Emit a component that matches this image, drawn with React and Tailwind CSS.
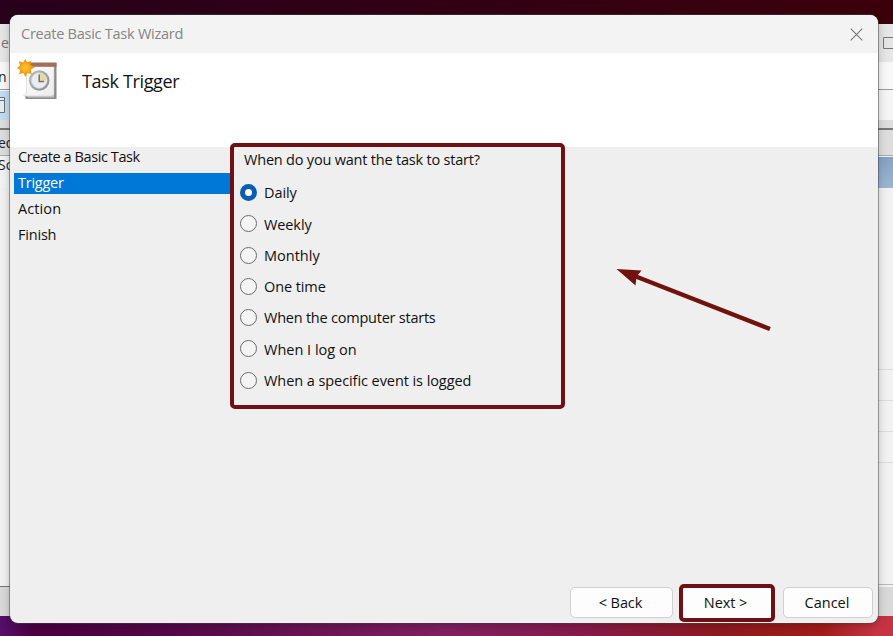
const STEPS = [
  ["Create a Basic Task", "tracking-[-0.4px]"],
  ["Trigger", "tracking-[-0.25px]"],
  ["Action", "tracking-[0.1px]"],
  ["Finish", "tracking-[-0.2px]"],
];

const TRIGGERS = [
  ["Daily", "tracking-[-0.1px]"],
  ["Weekly", "tracking-[-0.1px]"],
  ["Monthly", "tracking-[0px]"],
  ["One time", "tracking-[-0.1px]"],
  ["When the computer starts", "tracking-[-0.23px]"],
  ["When I log on", "tracking-[0px]"],
  ["When a specific event is logged", "tracking-[-0.07px]"],
];

function TaskIcon() {
  return (
    <svg width="42" height="42" viewBox="0 0 42 42" className="shrink-0">
      <defs>
        <linearGradient id="page" x1="0" y1="0" x2="1" y2="1">
          <stop offset="0" stopColor="#ffffff" />
          <stop offset="1" stopColor="#ececec" />
        </linearGradient>
        <linearGradient id="rim" x1="0" y1="0" x2="1" y2="1">
          <stop offset="0" stopColor="#b9bec3" />
          <stop offset="1" stopColor="#858b91" />
        </linearGradient>
        <radialGradient id="sun">
          <stop offset="0" stopColor="#ffc83c" />
          <stop offset="1" stopColor="#f6a012" />
        </radialGradient>
      </defs>
      <path d="M10 4H39.500V40H8.500V36H10Z" fill="#8d8a88" />
      <path d="M9 36L11 38.500H37V36Z" fill="#c4c4c4" />
      <path d="M9.500 7H37V36L34 37H6.500L9.500 34Z" fill="url(#page)" stroke="#c9c9c9" strokeWidth="0.500" />
      <path d="M10 3.500H39.500V7.800H10Z" fill="#a0705c" />
      <circle cx="22.200" cy="21.500" r="10.300" fill="url(#rim)" />
      <circle cx="22.200" cy="21.500" r="7.800" fill="#e9edf0" stroke="#d4d8db" strokeWidth="0.800" />
      <path d="M22.200 21.500V14A7.500 7.500 0 0 1 29.700 21.500Z" fill="#e5d9ac" />
      <path d="M22.200 15.500V22.500H27.200" fill="none" stroke="#7b6d55" strokeWidth="1.500" />
      <path
        d="M8.300 0L10.100 3.200L14.300 1.800L13.400 5.800L17.800 8.500L13.700 10.500L14.600 15L10.300 13.900L8.400 18L6.300 14L2 15.300L3.200 11L0 9L3 6.500L1.900 2.300L6.200 3.400Z"
        fill="#f39a13"
      />
      <circle cx="8.400" cy="9" r="5.600" fill="url(#sun)" />
    </svg>
  );
}

function Radio({ checked }) {
  return checked ? (
    <span className="flex size-[17px] shrink-0 items-center justify-center rounded-full bg-[#0a5db3]">
      <span className="size-[7px] rounded-full bg-white" />
    </span>
  ) : (
    <span className="size-[17px] shrink-0 rounded-full border border-[#6c6c6c] bg-[#f4f4f4]" />
  );
}

function BackgroundWindow() {
  return (
    <div className="flex h-[592px] w-full flex-col overflow-hidden bg-[#f3f3f3] text-[14px] text-[#222]">
      <div className="flex h-[38px] items-center justify-between bg-[#e6e6e6]">
        <span className="-mt-px ml-px text-[#777]">e</span>
        <svg width="10" height="12" viewBox="0 0 10 12">
          <path d="M10 .5H.5V11.5H10" fill="none" stroke="#777" />
        </svg>
      </div>
      <div className="flex h-[28px] items-center border-b border-[#999] bg-[#f8f8f8]">
        <span className="-ml-[2px] mt-[2px]">n</span>
      </div>
      <div className="flex h-[30px] items-center bg-[#f5f5f5]">
        <span className="flex h-[29px] w-[9px] items-center bg-[#c2ddf1]">
          <svg width="6" height="18" viewBox="0 0 6 18">
            <path d="M0 1.500H4.500V16.500H0" fill="#e8edf1" stroke="#66717c" />
            <path d="M0 4.500H4" stroke="#66717c" />
          </svg>
        </span>
      </div>
      <div className="flex h-[10px] flex-col justify-end border-b-2 border-[#777] bg-[#dedede]" />
      <div className="flex h-[26px] items-center border-b border-[#aaa] bg-[#dedede]">
        <span className="-ml-[2px]">ed</span>
      </div>
      <div className="flex h-[32px] justify-between">
        <span className="-ml-[2px] -mt-[2px]">So</span>
        <span className="mt-px h-[31px] w-[17px] bg-gradient-to-b from-[#85a2c3] to-[#9db6d2]" />
      </div>
      <div className="flex h-[399px] justify-between bg-[#ededed]">
        <span className="w-[12px] border-b border-[#777] bg-[#f1f1f1]" />
        <div className="flex w-[17px] flex-col bg-[#f2f2f2]">
          <span className="h-[182px] border-b border-[#ddd]" />
          <span className="h-[31px] border-b border-[#ddd]" />
          <span className="h-[31px] border-b border-[#ddd]" />
          <span className="h-[31px] border-b border-[#ddd]" />
          <span className="mb-[2px] flex-1 border-b border-[#bbb]" />
        </div>
      </div>
      <div className="flex-1 bg-[#d9d9d9]" />
    </div>
  );
}

export default function App() {
  return (
    <div className="relative h-[636px] w-[893px] overflow-hidden bg-[linear-gradient(90deg,#560f6b_0,#4a003f_4%,#55084a_20%,#812060_50%,#861a4b_65%,#8d1920_80%,#a11c18_92%,#c63342_98%)] font-['Open_Sans','Noto_Sans',sans-serif]">
      <div className="h-[24px] bg-gradient-to-r from-[#28001b] to-[#3c000b]" />
      <BackgroundWindow />

      <section className="absolute left-[10px] top-[15px] flex h-[608px] w-[868px] flex-col rounded-[8px] bg-[#efefef] text-[14.5px] text-[#111] shadow-[0_0_0_1px_rgba(70,70,70,0.5),0_2px_10px_rgba(0,0,0,0.25)]">
        <header className="flex h-[38px] shrink-0 items-center justify-between rounded-t-[8px] bg-[#f3f3f3] pl-[11px] pr-[15px]">
          <span className="tracking-[-0.25px] text-[#858585]">Create Basic Task Wizard</span>
          <svg width="13" height="13" viewBox="0 0 13 13">
            <path d="M.7 .7L12.300 12.300M12.300 .7L.7 12.300" stroke="#777" strokeWidth="1.100" />
          </svg>
        </header>
        <div className="flex h-[94px] shrink-0 bg-white pl-[7px] pt-[6px]">
          <TaskIcon />
          <h1 className="ml-[23px] mt-[8px] text-[18px] leading-[28px] tracking-[-0.35px]">Task Trigger</h1>
        </div>
        <main className="flex flex-1">
          <nav className="w-[220px] pl-[4px]">
            {STEPS.map(([label, tracking], i) => (
              <div
                key={label}
                className={`mb-[5px] flex h-[21px] items-center pl-[4px] leading-[18px] ${tracking} ${
                  i === 1 ? "bg-[#0078d7] text-white" : ""
                }`}
              >
                <span className="-mt-[2px]">{label}</span>
              </div>
            ))}
          </nav>
          <fieldset className="-mt-[4px] h-[266px] w-[335px] rounded-[5px] border-4 border-[#6f1014] bg-[#efefef]">
            <p className="pl-[10px] pt-[4px] leading-[18px] tracking-[-0.2px]">When do you want the task to start?</p>
            <div className="mt-[8px] pl-[6px]">
              {TRIGGERS.map(([label, tracking], i) => (
                <label key={label} className={`flex h-[31.250px] items-center gap-[7px] ${tracking}`}>
                  <Radio checked={i === 0} />
                  <span className="mt-px">{label}</span>
                </label>
              ))}
            </div>
          </fieldset>
          <svg className="ml-[50px] mt-[118px]" width="160" height="68" viewBox="0 0 160 68">
            <path d="M19 10.700L155 64" fill="none" stroke="#70130f" strokeWidth="4.300" />
            <path d="M1.500 4L26.500 5.500L21.500 11.700L20.500 20.500Z" fill="#70130f" />
          </svg>
        </main>
        <footer className="flex h-[39px] shrink-0 items-start justify-end pr-[5px]">
          <button className="mr-[6px] mt-[3px] h-[31px] w-[103px] rounded-[5px] border border-[#d0d0d0] bg-[#fdfdfd] pr-[2px] tracking-[-0.1px]">
            &lt; Back
          </button>
          <button className="mr-[8px] h-[38px] w-[96px] rounded-[5px] border-4 border-[#6f1014] bg-[#fdfdfd] pb-px pr-[3px] tracking-[-0.1px]">
            Next &gt;
          </button>
          <button className="mt-[3px] h-[31px] w-[90px] rounded-[5px] border border-[#d0d0d0] bg-[#fdfdfd] pr-[2px]">
            Cancel
          </button>
        </footer>
      </section>
    </div>
  );
}
